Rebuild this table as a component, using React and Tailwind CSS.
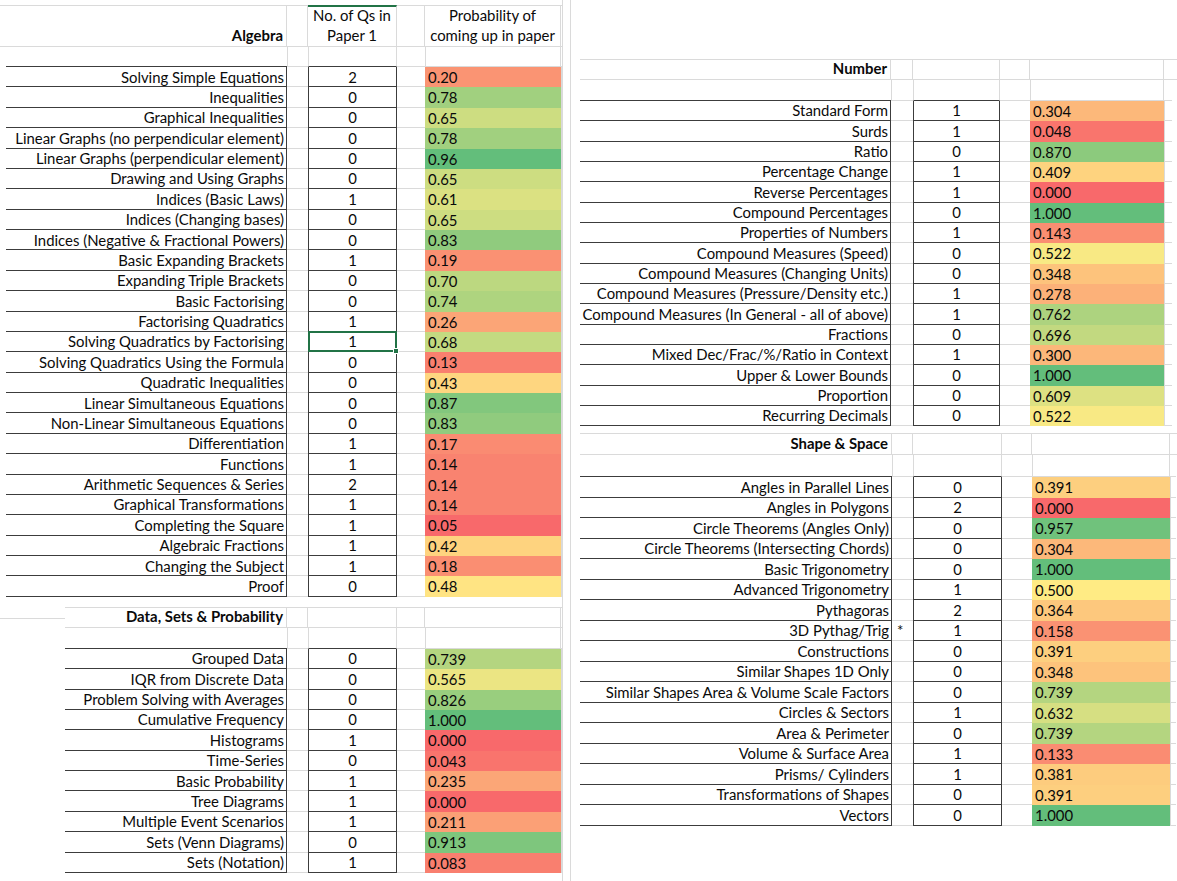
import React from "react";

const ALG = [
  ["Solving Simple Equations", "2", "0.20"],
  ["Inequalities", "0", "0.78"],
  ["Graphical Inequalities", "0", "0.65"],
  ["Linear Graphs (no perpendicular element)", "0", "0.78"],
  ["Linear Graphs (perpendicular element)", "0", "0.96"],
  ["Drawing and Using Graphs", "0", "0.65"],
  ["Indices (Basic Laws)", "1", "0.61"],
  ["Indices (Changing bases)", "0", "0.65"],
  ["Indices (Negative & Fractional Powers)", "0", "0.83"],
  ["Basic Expanding Brackets", "1", "0.19"],
  ["Expanding Triple Brackets", "0", "0.70"],
  ["Basic Factorising", "0", "0.74"],
  ["Factorising Quadratics", "1", "0.26"],
  ["Solving Quadratics by Factorising", "1", "0.68"],
  ["Solving Quadratics Using the Formula", "0", "0.13"],
  ["Quadratic Inequalities", "0", "0.43"],
  ["Linear Simultaneous Equations", "0", "0.87"],
  ["Non-Linear Simultaneous Equations", "0", "0.83"],
  ["Differentiation", "1", "0.17"],
  ["Functions", "1", "0.14"],
  ["Arithmetic Sequences & Series", "2", "0.14"],
  ["Graphical Transformations", "1", "0.14"],
  ["Completing the Square", "1", "0.05"],
  ["Algebraic Fractions", "1", "0.42"],
  ["Changing the Subject", "1", "0.18"],
  ["Proof", "0", "0.48"],
];

const DATA = [
  ["Grouped Data", "0", "0.739"],
  ["IQR from Discrete Data", "0", "0.565"],
  ["Problem Solving with Averages", "0", "0.826"],
  ["Cumulative Frequency", "0", "1.000"],
  ["Histograms", "1", "0.000"],
  ["Time-Series", "0", "0.043"],
  ["Basic Probability", "1", "0.235"],
  ["Tree Diagrams", "1", "0.000"],
  ["Multiple Event Scenarios", "1", "0.211"],
  ["Sets (Venn Diagrams)", "0", "0.913"],
  ["Sets (Notation)", "1", "0.083"],
];

const NUM = [
  ["Standard Form", "1", "0.304"],
  ["Surds", "1", "0.048"],
  ["Ratio", "0", "0.870"],
  ["Percentage Change", "1", "0.409"],
  ["Reverse Percentages", "1", "0.000"],
  ["Compound Percentages", "0", "1.000"],
  ["Properties of Numbers", "1", "0.143"],
  ["Compound Measures (Speed)", "0", "0.522"],
  ["Compound Measures (Changing Units)", "0", "0.348"],
  ["Compound Measures (Pressure/Density etc.)", "1", "0.278"],
  ["Compound Measures (In General - all of above)", "1", "0.762"],
  ["Fractions", "0", "0.696"],
  ["Mixed Dec/Frac/%/Ratio in Context", "1", "0.300"],
  ["Upper & Lower Bounds", "0", "1.000"],
  ["Proportion", "0", "0.609"],
  ["Recurring Decimals", "0", "0.522"],
];

const SHAPE = [
  ["Angles in Parallel Lines", "0", "0.391"],
  ["Angles in Polygons", "2", "0.000"],
  ["Circle Theorems (Angles Only)", "0", "0.957"],
  ["Circle Theorems (Intersecting Chords)", "0", "0.304"],
  ["Basic Trigonometry", "0", "1.000"],
  ["Advanced Trigonometry", "1", "0.500"],
  ["Pythagoras", "2", "0.364"],
  ["3D Pythag/Trig", "1", "0.158", "*"],
  ["Constructions", "0", "0.391"],
  ["Similar Shapes 1D Only", "0", "0.348"],
  ["Similar Shapes Area & Volume Scale Factors", "0", "0.739"],
  ["Circles & Sectors", "1", "0.632"],
  ["Area & Perimeter", "0", "0.739"],
  ["Volume & Surface Area", "1", "0.133"],
  ["Prisms/ Cylinders", "1", "0.381"],
  ["Transformations of Shapes", "0", "0.391"],
  ["Vectors", "0", "1.000"],
];

const RED = [248, 105, 107];
const YEL = [255, 235, 132];
const GRN = [99, 190, 123];

function scaleColor(v, min, max) {
  const mid = (min + max) / 2;
  let a, b, t;
  if (v <= mid) {
    a = RED;
    b = YEL;
    t = (v - min) / (mid - min);
  } else {
    a = YEL;
    b = GRN;
    t = (v - mid) / (max - mid);
  }
  t = Math.max(0, Math.min(1, t));
  const c = a.map((x, i) => Math.round(x + (b[i] - x) * t));
  return `rgb(${c[0]}, ${c[1]}, ${c[2]})`;
}

const LIGHT = "border-[#dadada]";
const DARK = "border-[#3c3c3c]";

function Block({
  className = "",
  leadW,
  labelW,
  headLabelW,
  gap1W,
  numW,
  gap2W,
  probW,
  tailW,
  rowH,
  headH,
  blankH,
  title,
  headNum,
  headProb,
  headNumClass = "",
  rows,
  min,
  max,
  selected = -1,
}) {
  return (
    <div className={`flex flex-col ${className}`}>
      {/* header row */}
      <div className={`flex border-t border-b ${LIGHT} ${headH}`}>
        <div className={`${headLabelW} border-r ${LIGHT} flex items-end justify-end pr-[3px] pb-[1px] font-bold leading-[20px]`}>
          {title}
        </div>
        <div className={`${gap1W} border-r ${LIGHT}`} />
        <div className={`${numW} border-r ${LIGHT} ${headNumClass} flex flex-col items-center justify-end pb-[1px] leading-[20px] text-center`}>
          {headNum}
        </div>
        <div className={`${gap2W} border-r ${LIGHT}`} />
        <div className={`${probW} border-r ${LIGHT} flex flex-col items-center justify-end pb-[1px] leading-[20px] text-center`}>
          {headProb}
        </div>
        <div className={tailW} />
      </div>
      {/* blank row */}
      <div className={`flex ${blankH}`}>
        <div className={leadW} />
        <div className={`${labelW} border-b ${DARK}`} />
        <div className={`${gap1W} border-b border-l ${LIGHT}`} />
        <div className={`${numW} border-b ${DARK} border-l-[#dadada] border-r-[#dadada] border-x`} />
        <div className={`${gap2W} border-b ${LIGHT}`} />
        <div className={`${probW} border-x border-b ${LIGHT}`} />
        <div className={`${tailW} border-b ${LIGHT}`} />
      </div>
      {rows.map(([label, n, p, star], i) => {
        const sel = i === selected;
        return (
          <div key={i} className={`flex ${rowH}`}>
            <div className={leadW} />
            <div className={`${labelW} border-b border-r ${DARK} flex items-center justify-end pr-[2px] whitespace-nowrap`}>
              {label}
            </div>
            <div className={`${gap1W} border-b ${LIGHT} flex items-start pt-[1px] pl-[5px] text-[15px] leading-[16px]`}>
              {star}
            </div>
            {sel ? (
              <div className={`${numW} relative border-2 border-[#217346] -mt-[1px] flex items-center justify-center`}>
                {n}
                <div className="absolute -right-[4px] -bottom-[4px] w-[6px] h-[6px] bg-[#217346] border border-white" />
              </div>
            ) : (
              <div className={`${numW} border-b border-x ${DARK} flex items-center justify-center`}>
                {n}
              </div>
            )}
            <div className={`${gap2W} border-b ${LIGHT}`} />
            <div
              className={`${probW} flex items-center pl-[3px]`}
              style={{ backgroundColor: scaleColor(parseFloat(p), min, max) }}
            >
              {p}
            </div>
            <div className={`${tailW} border-b border-l ${LIGHT}`} />
          </div>
        );
      })}
    </div>
  );
}

export default function App() {
  return (
    <div
      className="w-[1177px] h-[881px] bg-white overflow-hidden flex text-[14.9px] text-[#0a0a0a]"
      style={{ fontFamily: "Lato, 'Liberation Sans', sans-serif" }}
    >
      {/* left column */}
      <div className={`w-[563px] h-full border-r ${LIGHT} flex flex-col pt-[5px]`}>
        <Block
          leadW="w-[6px]"
          labelW="w-[281px]"
          headLabelW="w-[287px]"
          gap1W="w-[21px]"
          numW="w-[89px]"
          gap2W="w-[28px]"
          probW="w-[136px]"
          tailW="w-[1px]"
          rowH="h-[20.38px]"
          headH="h-[42px]"
          blankH="h-[20px]"
          title="Algebra"
          headNumClass="border-t-2 border-t-[#217346] -mt-[1px]"
          headNum={
            <>
              <span>No. of Qs in</span>
              <span>Paper 1</span>
            </>
          }
          headProb={
            <>
              <span>Probability of</span>
              <span>coming up in paper</span>
            </>
          }
          rows={ALG}
          min={0.05}
          max={0.96}
          selected={13}
        />
        <div className="flex items-start">
          <div className={`w-[65px] h-[22px] border-b ${LIGHT}`} />
          <Block
            className="mt-[10px]"
            leadW="w-0"
            labelW="w-[222px]"
            headLabelW="w-[222px]"
            gap1W="w-[21px]"
            numW="w-[89px]"
            gap2W="w-[28px]"
            probW="w-[136px]"
            tailW="w-[1px]"
            rowH="h-[20.4px]"
            headH="h-[21px]"
            blankH="h-[21px]"
            title="Data, Sets & Probability"
            rows={DATA}
            min={0}
            max={1}
          />
        </div>
      </div>
      {/* right column */}
      <div className={`ml-[7px] flex-1 h-full border-l ${LIGHT} flex flex-col pl-[9px]`}>
        <Block
          className="mt-[59px]"
          leadW="w-0"
          labelW="w-[311px]"
          headLabelW="w-[311px]"
          gap1W="w-[22px]"
          numW="w-[87px]"
          gap2W="w-[30px]"
          probW="w-[134px]"
          tailW="w-[8px]"
          rowH="h-[20.33px]"
          headH="h-[21px]"
          blankH="h-[21px]"
          title="Number"
          rows={NUM}
          min={0}
          max={1}
        />
        <Block
          className="mt-[7px]"
          leadW="w-0"
          labelW="w-[312px]"
          headLabelW="w-[312px]"
          gap1W="w-[21px]"
          numW="w-[89px]"
          gap2W="w-[30px]"
          probW="w-[138px]"
          tailW="w-[6px]"
          rowH="h-[20.5px]"
          headH="h-[22px]"
          blankH="h-[22px]"
          title="Shape & Space"
          rows={SHAPE}
          min={0}
          max={1}
        />
      </div>
    </div>
  );
}
